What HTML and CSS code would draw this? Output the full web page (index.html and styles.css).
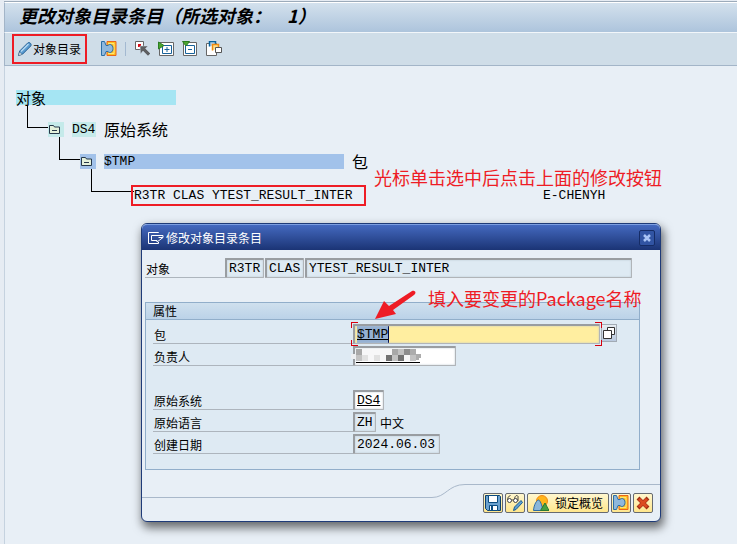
FILE: index.html
```
<!DOCTYPE html>
<html lang="zh-CN">
<head>
  <meta charset="UTF-8" />
  <title>更改对象目录条目</title>
  <meta name="viewport" content="width=device-width, initial-scale=1.0" />
  <link rel="stylesheet" href="styles.css">
</head>

<body>

  <!-- Shared icons -->
  <svg class="sprites" aria-hidden="true">
    <symbol id="folder" viewBox="0 0 16 15">
      <path d="M1.500 11.500v-8h4l1 1.500h5v6.500z" fill="#e4f1dc" stroke="#26384a" />
      <path d="M4 8.500h5" stroke="#26384a" />
    </symbol>
    <symbol id="other" viewBox="0 0 16 16">
      <path d="M6 .5h9v14H6v-4h5v-6H6z" fill="#ffc21c" stroke="#e8641b" />
      <path d="M7 2.500h6v10H7" fill="none" stroke="#ffe27a" />
      <path d="M.5 .5h3l1.500 4h2c1.500-2 5-1 5 3s-3.500 5-5 3H5l-1.500 4h-3z" fill="#8fb8dc" stroke="#2a6ea6" />
    </symbol>
  </svg>

  <!-- Title -->
  <header class="title-bar">
    <h1>更改对象目录条目（所选对象：<span class="count">1</span>）</h1>
  </header>

  <!-- Toolbar -->
  <nav class="toolbar">
    <button type="button" class="tool marked">
      <svg width="16" height="16" viewBox="0 0 16 16">
        <path d="M1.500 14.500l1.200-4.500 8-8c1.500-1.500 4.500 1 3 3l-8 8z" fill="#5b9bd0" stroke="#215f94" />
        <path d="M4 10.500l7.500-7.500" stroke="#b7d9f2" stroke-width="1.500" />
        <path d="M1.500 14.500l1-3.500 2.500 2.500z" fill="#f5f7f9" stroke="#4f6980" stroke-width=".6" />
      </svg>
      对象目录
    </button>
    <button type="button" class="tool" aria-label="其他对象"><svg width="16" height="16"><use href="#other" /></svg></button>
    <span class="divider"></span>
    <button type="button" class="tool" aria-label="选择">
      <svg width="16" height="16" viewBox="0 0 16 16">
        <path d="M1.500 .5h8v8h-8z" fill="#fff" stroke="#666" />
        <path d="M4 3h3v3H4z" fill="#d80d18" />
        <path d="M6 5h8l-2.500 2.500 5 5-2.500 2.500-5-5L6.500 13z" fill="#5f6062" stroke="#cfdde8" stroke-width=".5" />
      </svg>
    </button>
    <button type="button" class="tool" aria-label="展开">
      <svg width="16" height="16" viewBox="0 0 16 16">
        <path d="M1.500 1.500h14v13h-14z" fill="#fff" stroke="#666" />
        <path d="M4.500 4.500h9v8h-9zM9 6v5M6.500 8.500h5" fill="none" stroke="#17629b" />
        <path d="M.5 1v7L6 4.500z" fill="#4ba52f" stroke="#2b7d24" />
      </svg>
    </button>
    <button type="button" class="tool" aria-label="压缩">
      <svg width="16" height="16" viewBox="0 0 16 16">
        <path d="M1.500 1.500h13v13h-13z" fill="#fff" stroke="#666" />
        <path d="M3.500 4.500h9v8h-9zM6 8.500h4" fill="none" stroke="#17629b" />
        <path d="M.5 .5h7L4 5z" fill="#4ba52f" stroke="#2b7d24" />
      </svg>
    </button>
    <button type="button" class="tool" aria-label="全部">
      <svg width="16" height="16" viewBox="0 0 16 16">
        <path d="M.5 2.500h10v12H.5z" fill="#fff" stroke="#666" />
        <path d="M3.500 5.500v-5h6v3" fill="#b3d1e8" stroke="#07629c" stroke-width="1.500" />
        <path d="M6.500 9.500v-6h6v3" fill="#ffe08a" stroke="#f08a0e" stroke-width="1.500" />
        <path d="M9.500 6.500h6v5h-6z" fill="#fff" stroke="#555" />
      </svg>
    </button>
  </nav>

  <!-- Object tree -->
  <main>
    <div class="tree">
      <div class="row"><span class="root">对象</span></div>
      <div class="row level-1">
        <span class="branch"></span>
        <svg class="folder" width="16" height="15"><use href="#folder" /></svg>
        <span class="code system">DS4</span>
        <span>原始系统</span>
      </div>
      <div class="row level-2">
        <span class="branch"></span>
        <svg class="folder selected" width="16" height="15"><use href="#folder" /></svg>
        <span class="code package">$TMP</span>
        <span>包</span>
      </div>
      <div class="row level-3">
        <span class="branch"></span>
        <span class="code object">R3TR CLAS YTEST_RESULT_INTER</span>
        <span class="code">E-CHENYH</span>
      </div>
    </div>
  </main>

  <p class="note note-tree">光标单击选中后点击上面的修改按钮</p>

  <!-- Dialog -->
  <section class="dialog" role="dialog" aria-labelledby="dialogTitle">
    <header class="dialog-bar">
      <svg width="16" height="12" viewBox="0 0 16 12">
        <path d="M10.500 1V.5h-10v11h10V10M3.500 3.500v5H9V10l6-4.500h-4.500M3.500 3.500h11.500v2" fill="none" stroke="#fff" />
      </svg>
      <h2 id="dialogTitle">修改对象目录条目</h2>
      <button type="button" class="close" aria-label="关闭">
        <svg width="8" height="8" viewBox="0 0 8 8"><path d="M1 1l6 6M7 1L1 7" stroke="#a9c4f5" stroke-width="2.500" /></svg>
      </button>
    </header>

    <form>
      <div class="field object-field">
        <label for="objType">对象</label>
        <div class="inputs">
          <input class="w4" type="text" id="objType" value="R3TR" readonly>
          <input class="w4" type="text" aria-label="对象类型" value="CLAS" readonly>
          <input class="grow" type="text" aria-label="对象名称" value="YTEST_RESULT_INTER" readonly>
        </div>
      </div>

      <div class="group">
        <h3>属性</h3>
        <div class="fields">
          <div class="field">
            <label for="package">包</label>
            <div class="inputs">
              <span class="focus"><input class="active" type="text" id="package" value="$TMP"></span>
              <button type="button" class="help" aria-label="搜索帮助">
                <svg width="12" height="12" viewBox="0 0 12 12">
                  <path d="M4.500 .5h7v7h-7z" fill="#fff" stroke="#333" />
                  <path d="M.5 3.500h8v8h-8z" fill="#fff" stroke="#333" />
                </svg>
              </button>
            </div>
          </div>
          <div class="field">
            <label for="owner">负责人</label>
            <div class="inputs owner">
              <input class="w12 editable" type="text" id="owner">
              <svg class="mosaic" width="70" height="16" viewBox="0 0 70 16" shape-rendering="crispEdges">
                <path d="M0 6h5v5H0z" fill="#eceef1" />
                <path d="M5 1h60v12H5z" fill="#f7f7f8" />
                <path d="M5 1h6v6H5zM41 1h6v6h-6z" fill="#a8a8a8" />
                <path d="M5 7h6v6H5zM47 1h6v6h-6zM41 7h6v6h-6zM59 7h6v6h-6z" fill="#c2c2c2" />
                <path d="M11 7h6v6h-6zM23 7h6v6h-6z" fill="#e1e1e1" />
                <path d="M35 7h6v6h-6zM47 7h6v6h-6z" fill="#727272" />
                <path d="M53 1h6v6h-6z" fill="#8d8d8d" />
                <path d="M59 1h6v6h-6zM65 6h6v4h-3v2h-3z" fill="#acacac" />
                <path d="M5 14h64v1H5z" fill="#000" />
              </svg>
            </div>
          </div>
          <div class="field spaced">
            <label for="system">原始系统</label>
            <div class="inputs"><input class="w3 editable" type="text" id="system" value="DS4"></div>
          </div>
          <div class="field">
            <label for="language">原始语言</label>
            <div class="inputs"><input class="w2" type="text" id="language" value="ZH" readonly><span class="unit">中文</span></div>
          </div>
          <div class="field">
            <label for="created">创建日期</label>
            <div class="inputs"><input class="w10" type="text" id="created" value="2024.06.03" readonly></div>
          </div>
        </div>
      </div>
    </form>

    <footer class="dialog-footer">
      <div class="curve">
        <span class="low"></span>
        <svg width="36" height="14" viewBox="0 0 36 14">
          <path d="M0 13.500c14 0 16-13 33-13h3" fill="none" stroke="#a9b8ca" />
        </svg>
        <span class="high"></span>
      </div>
      <div class="buttons">
        <button type="button" class="action" aria-label="保存">
          <svg width="16" height="16" viewBox="0 0 16 16">
            <path d="M.5 .5h14l1 1v14h-13l-2-2z" fill="#6ca2cf" stroke="#0b3f6d" />
            <path d="M3.500 .5h9v7h-9z" fill="#fff" stroke="#0b4c80" />
            <path d="M4.500 10.500h8v5h-8z" fill="#fff" stroke="#0b4c80" />
            <path d="M6 11h2v4H6z" fill="#0b4c80" />
          </svg>
        </button>
        <button type="button" class="action" aria-label="显示或更改">
          <svg width="16" height="16" viewBox="0 0 16 16">
            <path d="M3.500 .5C1.500 1 .5 3 .5 5M10.500 .5c-2-.5-3 2-3 4" fill="none" stroke="#444" />
            <circle cx="2.500" cy="5.500" r="2" fill="#fff" stroke="#444" />
            <circle cx="8.500" cy="5.500" r="2" fill="#fff" stroke="#444" />
            <path d="M4.500 5h2M11 1v5" stroke="#444" />
            <path d="M6.500 15.500l1-3.500L14 5.500l1.500 2L9 14.500z" fill="#5f9fd2" stroke="#175b92" />
          </svg>
        </button>
        <button type="button" class="action wide">
          <svg width="16" height="16" viewBox="0 0 16 16">
            <circle cx="9" cy="6" r="5.500" fill="#ffb51b" stroke="#f28a12" />
            <path d="M.5 15.500C1 9 4 5 5.500 5S9 10 10 15.500z" fill="#8ab6da" stroke="#2b6ca4" />
            <path d="M7.500 15.500L12 8l4 7.500z" fill="#48a041" stroke="#287b31" />
          </svg>
          锁定概览
        </button>
        <button type="button" class="action" aria-label="其他对象"><svg width="16" height="16"><use href="#other" /></svg></button>
        <button type="button" class="action" aria-label="取消">
          <svg width="16" height="16" viewBox="0 0 16 16"><path d="M3 3l10 10M13 3L3 13" stroke="#9e2d16" stroke-width="4" /><path d="M4 4l8 8M12 4l-8 8" stroke="#dc4b20" stroke-width="3" /></svg>
        </button>
      </div>
    </footer>
  </section>

  <p class="note note-package">填入要变更的Package名称</p>
  <svg class="arrow" width="42" height="30" viewBox="0 0 42 30">
    <path d="M37 1c3-1 5 2 2 4L18 20l3 4L0 29 9 11l5 5z" fill="#ee1c25" />
  </svg>

</body>
</html>
```
FILE: styles.css
```
* {
  box-sizing: border-box;
}

body {
  display: flex;
  flex-direction: column;
  min-height: 100vh;
  margin: 0;
  padding: 2px 0 0 4px;
  overflow: hidden;
  background-color: #e6ecf3;
  color: #000;
  font: 12px/16px "Noto Sans CJK SC", sans-serif;
}

h1, h2, h3, p {
  margin: 0;
  font-weight: normal;
}

button, input {
  margin: 0;
  padding: 0;
  font: inherit;
  color: inherit;
}

svg {
  display: block;
  flex: none;
}

.sprites {
  position: absolute;
  width: 0;
  height: 0;
}

/* Title */
.title-bar {
  height: 30px;
  padding: 0 14px;
  border-top: 1px solid #fff;
  border-left: 1px solid #a3b5c8;
  background: linear-gradient(#d3e1ed, #adc4dc);
  box-shadow: 0 -1px #9cabba;
}

h1 {
  font-size: 18px;
  font-weight: bold;
  font-style: italic;
  line-height: 24px;
  white-space: nowrap;
}

.count {
  margin-left: 16px;
}

/* Toolbar */
.toolbar {
  display: flex;
  align-items: center;
  gap: 8px;
  height: 34px;
  padding-left: 7px;
  border-top: 1px solid #f2f6fa;
  border-bottom: 1px solid #a3b5c8;
  border-left: 1px solid #a3b5c8;
  background-color: #cfdde8;
}

.tool {
  border: none;
  background: none;
  white-space: nowrap;
}

.marked {
  display: flex;
  align-items: center;
  height: 30px;
  margin-right: 6px;
  padding: 0 4px 0 3px;
  border: 2px solid #ee1c25;
}

.divider {
  width: 1px;
  height: 14px;
  background-color: #a3b9d1;
}

/* Tree */
main {
  flex: 1;
  padding: 7px 11px;
  border-left: 1px solid #c5d2df;
  background-color: #e8eff6;
}

.row {
  display: flex;
  align-items: flex-end;
  height: 32px;
  font-size: 16px;
  line-height: 15px;
  white-space: nowrap;
}

.code, input {
  font-family: "Liberation Mono", "Noto Sans CJK SC", monospace;
  font-size: 13px;
}

.root {
  width: 160px;
  background-color: #a5e5f3;
  font-size: 15px;
}

.level-1 { padding-left: 11px; }
.level-2 { padding-left: 43px; }

.level-3 {
  height: 34px;
  padding-left: 75px;
}

.branch {
  align-self: flex-start;
  width: 21px;
  height: 23px;
  border-left: 1px solid #000;
  border-bottom: 1px solid #000;
}

.level-3 .branch {
  width: 43px;
}

.folder {
  margin-right: 8px;
  background-color: #c5eaea;
}

.folder.selected {
  background-color: #a2c2ea;
}

.system {
  width: 24px;
  margin-right: 8px;
  background-color: #c5eaea;
}

.package {
  width: 240px;
  margin-right: 8px;
  background-color: #a2c2ea;
}

.object {
  width: 229px;
  margin-right: 180px;
  outline: 2px solid #ee1c25;
  outline-offset: 1px;
}

/* Notes */
.note {
  position: absolute;
  color: #ee1c25;
  font-size: 18px;
  line-height: 20px;
  white-space: nowrap;
}

.note-tree {
  top: 167px;
  left: 374px;
}

.note-package {
  top: 288px;
  left: 428px;
}

.arrow {
  position: absolute;
  top: 290px;
  left: 375px;
}

/* Dialog */
.dialog {
  position: absolute;
  top: 223px;
  left: 141px;
  width: 520px;
  border: 1px solid #1f3b78;
  border-radius: 6px;
  background-color: #e8eff6;
  box-shadow: 2px 5px 10px 1px rgba(0, 0, 0, 0.55);
}

.dialog-bar {
  display: flex;
  align-items: center;
  gap: 2px;
  height: 26px;
  padding: 0 5px 0 6px;
  border-top: 1px solid #7c9ee0;
  border-radius: 5px 5px 0 0;
  background: linear-gradient(#4469bf, #1b3475);
  color: #fff;
}

h2 {
  flex: 1;
  font-size: 12px;
}

.close {
  display: flex;
  align-items: center;
  justify-content: center;
  width: 16px;
  height: 16px;
  border: 1px solid #152c66;
  border-radius: 2px;
  background-color: #3154a3;
}

form {
  padding: 8px 20px 0 3px;
}

.field {
  display: flex;
  height: 20px;
}

.field label {
  width: 200px;
  padding-left: 1px;
  border-bottom: 1px solid #adb5bd;
  line-height: 22px;
}

.object-field {
  margin-right: 8px;
}

.object-field label {
  width: 80px;
}

.inputs {
  display: flex;
  flex: 1;
  gap: 1px;
}

input {
  width: 39px;
  height: 20px;
  padding: 0 2px;
  border: 1px solid #b0b4b8;
  border-top: 2px solid #999da1;
  border-left: 2px solid #999da1;
  border-radius: 1px;
  outline: none;
  background-color: #deeaf3;
  box-shadow: inset 0 0 2px #b8c4ce;
}

.w2 { width: 23px; }
.w3 { width: 31px; }
.w4 { width: 39px; }
.w10 { width: 87px; }
.w12 { width: 103px; }

.grow {
  flex: 1;
}

.editable {
  background-color: #fff;
  text-decoration: underline;
}

.group {
  margin-top: 24px;
  border: 1px solid #91aeca;
  background-color: #deeaf3;
}

h3 {
  padding-left: 7px;
  border-bottom: 1px solid #91aeca;
  background: linear-gradient(#cfe0ee, #bbd2e8);
  font-size: 12px;
  line-height: 16px;
}

.fields {
  display: flex;
  flex-direction: column;
  gap: 2px;
  padding: 4px 22px 15px 7px;
}

.spaced {
  margin-top: 22px;
}

.focus {
  position: relative;
  flex: 1;
}

.active {
  width: 100%;
  background: linear-gradient(90deg, #94b0d2 31px, #000b50 31px, #000b50 32px, transparent 32px) 2px 0 no-repeat #ffeea0;
  text-decoration: underline;
}

/* Red corner marks round the active field */
.focus::before, .focus::after {
  content: "";
  position: absolute;
  top: -2px;
  left: -2px;
  width: 6px;
  height: 24px;
  border-left: 1px solid #d6000d;
  background: linear-gradient(#d6000d, #d6000d) top / 100% 1px no-repeat, linear-gradient(#d6000d, #d6000d) bottom / 100% 1px no-repeat;
  clip-path: polygon(0 0, 100% 0, 100% 6px, 0 6px, 0 18px, 100% 18px, 100% 100%, 0 100%);
}

.focus::after {
  right: -2px;
  left: auto;
  border-right: 1px solid #d6000d;
  border-left: none;
}

.help {
  display: flex;
  align-items: center;
  justify-content: center;
  width: 16px;
  height: 18px;
  border: 1px solid #a2abb4;
  background: linear-gradient(#e6edf3, #b9c9df);
}

.owner {
  position: relative;
}

.mosaic {
  position: absolute;
  top: 2px;
  left: -2px;
}

.unit {
  margin-left: 3px;
  line-height: 22px;
}

/* Dialog footer */
.dialog-footer {
  padding-top: 14px;
}

.curve {
  display: flex;
}

.low {
  width: 290px;
  border-bottom: 1px solid #a9b8ca;
}

.high {
  flex: 1;
  border-top: 1px solid #a9b8ca;
}

.buttons {
  display: flex;
  justify-content: flex-end;
  gap: 2px;
  margin-top: -5px;
  padding: 0 7px 8px;
}

.action {
  display: flex;
  align-items: center;
  justify-content: center;
  gap: 6px;
  width: 20px;
  height: 20px;
  border: 1px solid #666a70;
  border-radius: 2px;
  background: linear-gradient(#fff7cf, #ffe68c);
  white-space: nowrap;
}

.wide {
  width: 82px;
}
```
